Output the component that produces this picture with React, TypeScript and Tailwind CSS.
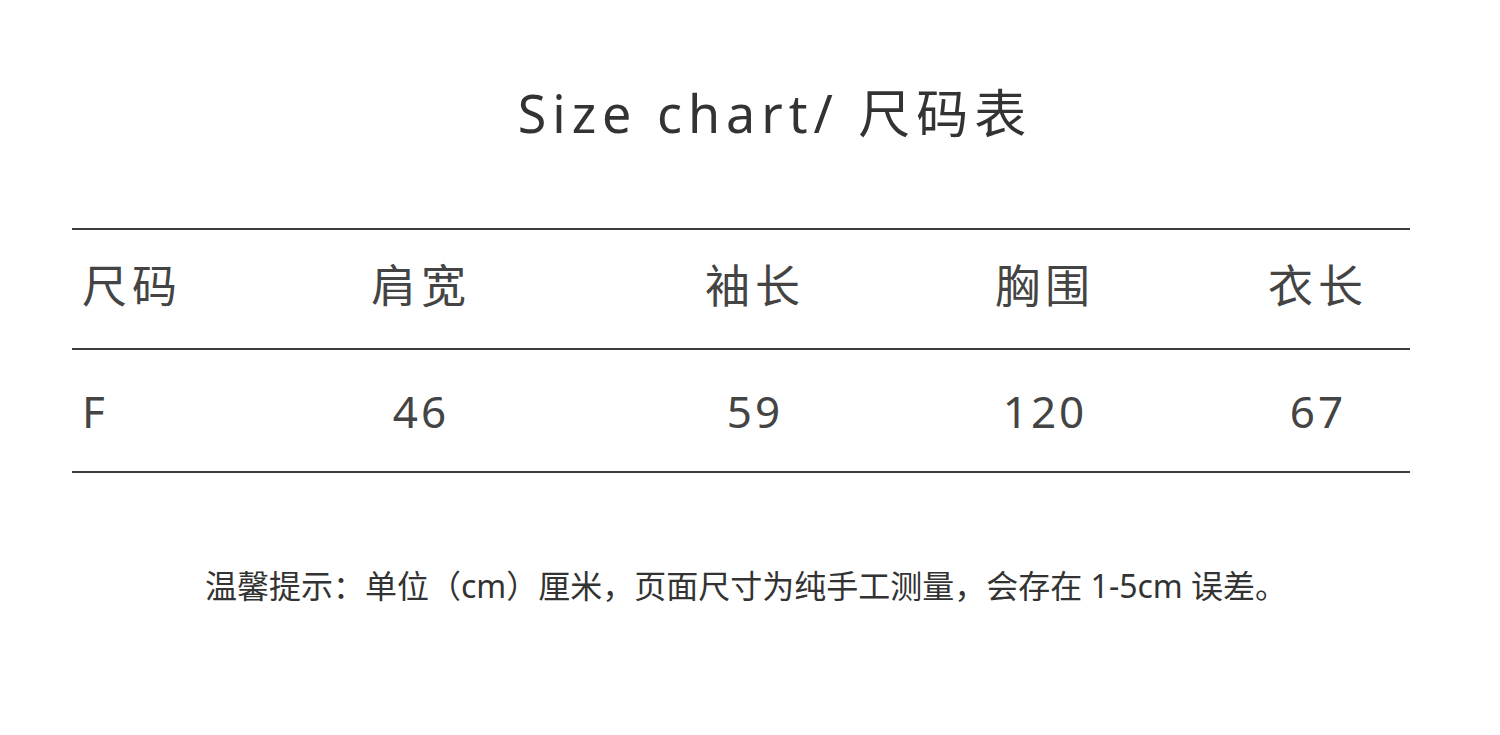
const font = "font-['Noto_Sans','Noto_Sans_CJK_SC',sans-serif]";

const headers = ["肩宽", "袖长", "胸围", "衣长"];
const values = ["46", "59", "120", "67"];
const offsets = ["ml-0", "ml-[214px]", "ml-[170px]", "ml-[153px]"];

export default function App() {
  return (
    <div className={`h-[735px] w-[1500px] bg-white ${font} text-[#3a3a3a]`}>
      <div className="flex justify-center pt-[87px] pl-[50px]">
        <h1 className="text-[52px] leading-none tracking-[6px] text-[#333]">
          Size chart/ 尺码表
        </h1>
      </div>

      <div className="ml-[72px] mt-[89px] w-[1338px]">
        <div className="flex h-[122px] items-center border-y-2 border-[#3d3d3d] pb-[6px]">
          <div className="w-[289px] pl-[10px] text-[45px] tracking-[5px] text-[#444]">尺码</div>
          {headers.map((h, i) => (
            <div key={h} className={`w-[120px] text-center text-[45px] tracking-[5px] text-[#444] ${offsets[i]}`}>
              {h}
            </div>
          ))}
        </div>
        <div className="flex h-[123px] items-center border-b-2 border-[#3d3d3d]">
          <div className="w-[289px] pl-[10px] text-[44px] text-[#444]">F</div>
          {values.map((v, i) => (
            <div key={i} className={`w-[120px] text-center text-[44px] tracking-[3px] text-[#444] ${offsets[i]}`}>
              {v}
            </div>
          ))}
        </div>
      </div>

      <p className="mt-[97px] pl-[205px] text-[32px] leading-none text-[#333]">
        温馨提示：单位（cm）厘米，页面尺寸为纯手工测量，会存在 1-5cm 误差。
      </p>
    </div>
  );
}
